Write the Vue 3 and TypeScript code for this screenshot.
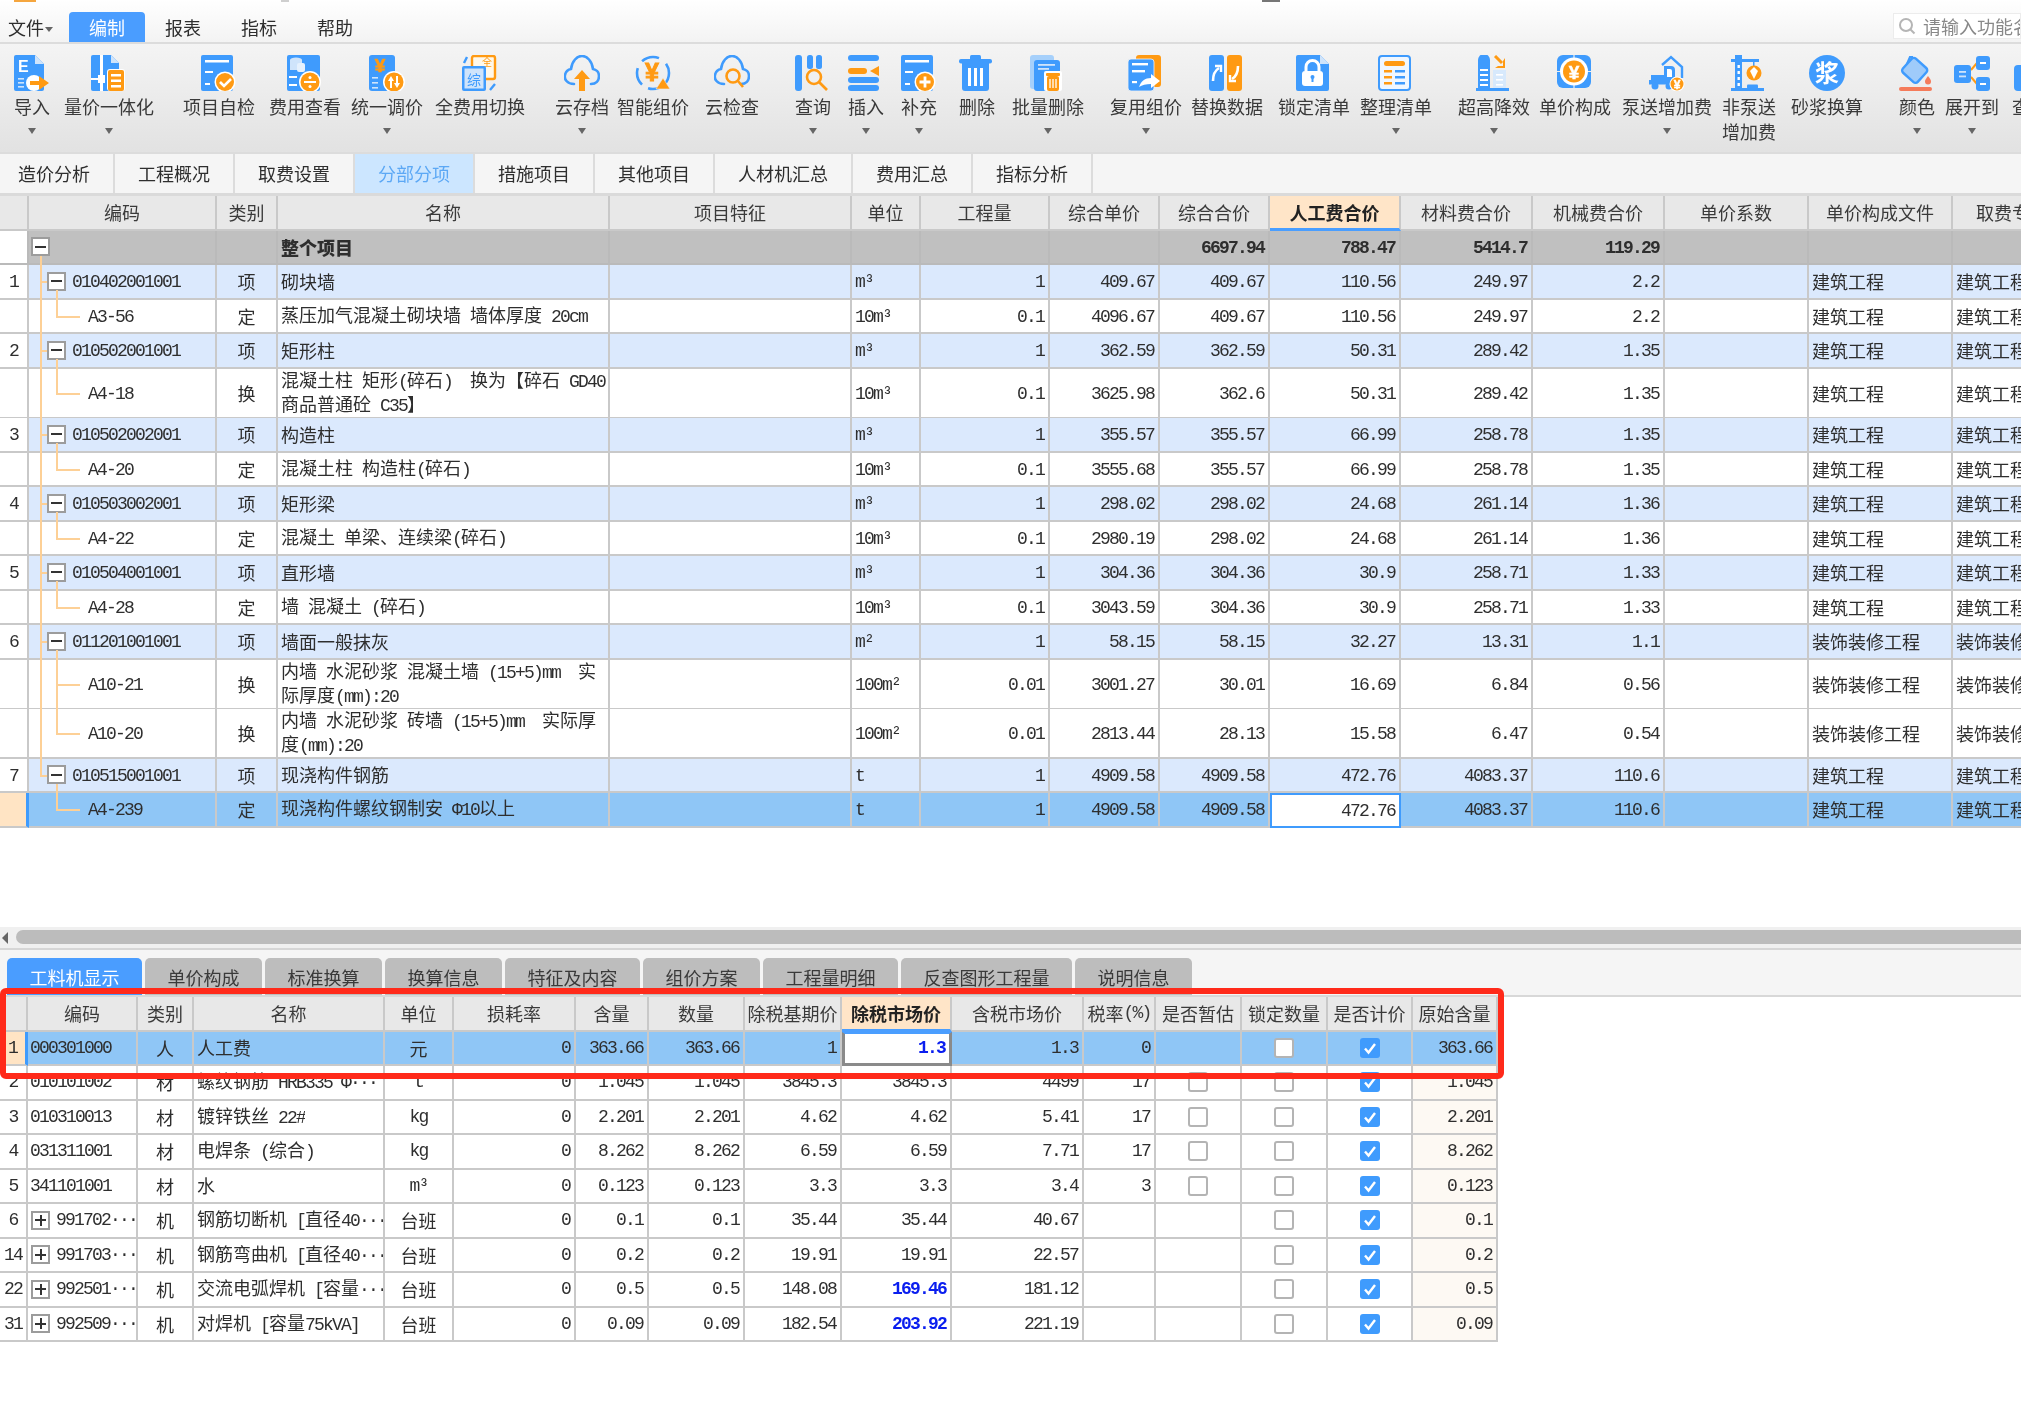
<script setup lang="ts">
const B = '#3f9bfd'
const O = '#ff9a13'
const LB = '#cfe4fb'
const cloud = `<path d="M10 29C3 29 0 24 1 20c.7-3.5 3.5-5.5 6-6C8 6 13 1 18 1s10 5 11 13c3 .5 6 3 6 7 0 5-3 8-8 8" fill="none" stroke="${B}" stroke-width="2.6" stroke-linecap="round"/>`
const doc = `<path d="M2 0H21L30 9V34a2 2 0 0 1-2 2H2a2 2 0 0 1-2-2V2a2 2 0 0 1 2-2z" fill="${B}"/><path d="M21 0L30 9H21z" fill="${LB}"/>`
const yuan = (x: number, y: number, s: number) => `<text x="${x}" y="${y}" font-size="${s}" font-weight="700" text-anchor="middle" fill="#fff" stroke="#fff" stroke-width=".5" font-family="Liberation Sans">¥</text>`

const icons: Record<string, string> = {
  imp: `${doc}<text x="4" y="17" font-size="16" font-weight="700" fill="#fff" font-family="Liberation Sans">E</text><rect x="4" y="23" width="6" height="1.6" fill="${LB}"/><rect x="4" y="27" width="6" height="1.6" fill="${LB}"/><rect x="4" y="31" width="6" height="1.6" fill="${LB}"/><circle cx="20" cy="28" r="8" fill="#fff"/><path d="M16 26h9v-5l10 7-10 7v-5h-9z" fill="${O}"/>`,
  merge: `<path d="M2 0H20L28 8V34a2 2 0 0 1-2 2H2a2 2 0 0 1-2-2V2a2 2 0 0 1 2-2z" fill="${B}"/><path d="M20 0L28 8H20z" fill="${LB}"/><rect x="9" y="0" width="3" height="36" fill="#fff"/><rect x="0" y="23" width="8" height="2" fill="#fff"/><rect x="7" y="20" width="7" height="8" fill="#fff"/><rect x="16" y="14" width="18" height="22" rx="3" fill="#fff"/><rect x="17" y="15" width="16" height="21" rx="2" fill="${O}"/><rect x="20" y="19" width="10" height="2.5" fill="#fff"/><rect x="20" y="24.5" width="10" height="2.5" fill="#fff"/><rect x="20" y="30" width="10" height="2.5" fill="#fff"/>`,
  check: `<rect width="32" height="36" rx="2" fill="${B}"/><rect x="4" y="5" width="24" height="2.5" fill="#fff"/><rect x="4" y="16" width="8" height="2" fill="#fff"/><rect x="4" y="28" width="5" height="2" fill="#fff"/><circle cx="24" cy="27" r="10.5" fill="#fff"/><circle cx="24" cy="27" r="9" fill="${O}"/><path d="M19 27l4 4 7-7" fill="none" stroke="#fff" stroke-width="2.6"/>`,
  fee: `<rect width="33" height="36" rx="2" fill="${B}"/><ellipse cx="9" cy="5" rx="6" ry="2.5" fill="${LB}"/><rect x="3" y="5" width="12" height="10" fill="${LB}"/><rect x="10" y="8" width="8" height="9" rx="2" fill="#e6f1fd"/><rect x="2" y="21" width="8" height="2" fill="#fff"/><rect x="2" y="29" width="8" height="2" fill="#fff"/><circle cx="23" cy="27" r="11" fill="#fff"/><circle cx="23" cy="27" r="9.5" fill="${O}"/><rect x="17" y="26" width="12" height="2" fill="#fff"/><circle cx="23" cy="22.5" r="1.5" fill="#fff"/><circle cx="23" cy="31.5" r="1.5" fill="#fff"/>`,
  tiao: `<rect width="26" height="36" rx="3" fill="${B}"/><text x="11" y="17" font-size="19" font-weight="700" text-anchor="middle" fill="${O}" stroke="${O}" stroke-width=".7" font-family="Liberation Sans">¥</text><rect x="3" y="22" width="6" height="1.6" fill="${LB}"/><rect x="3" y="27" width="6" height="1.6" fill="${LB}"/><rect x="3" y="32" width="6" height="1.6" fill="${LB}"/><circle cx="25" cy="27" r="11" fill="#fff"/><circle cx="25" cy="27" r="9.5" fill="${O}"/><path d="M22 21l3 5h-2v7h-2v-7h-2zM28 33l-3-5h2v-7h2v7h2z" fill="#fff"/>`,
  quan: `<rect x="10" y="1" width="23" height="23" rx="2" fill="#fff8ea" stroke="${O}" stroke-width="2.4"/><text x="20" y="11" font-size="10" fill="${O}" font-family="Noto Sans CJK SC">全</text><rect y="11" width="24" height="25" rx="2" fill="${B}"/><rect x="2.5" y="13.5" width="19" height="20" fill="${LB}"/><text x="5" y="30" font-size="14" fill="${B}" font-family="Noto Sans CJK SC">综</text><path d="M2 8l3-6M28 35l5-6" stroke="${B}" stroke-width="2.4" fill="none"/>`,
  cloudup: `${cloud}<path d="M18 15l8 9h-5v12h-6V24h-5z" fill="${O}"/>`,
  smart: `<circle cx="18" cy="18" r="16" fill="none" stroke="${B}" stroke-width="2.6" stroke-dasharray="30 7 18 8 18 9"/><text x="17" y="26" font-size="25" font-weight="700" text-anchor="middle" fill="${O}" stroke="${O}" stroke-width="1" font-family="Liberation Sans">¥</text><path d="M28 23l7 11H21z" fill="${O}" stroke="#f0f0f0" stroke-width=".6"/>`,
  cloudsearch: `${cloud}<circle cx="19" cy="21" r="6.5" fill="none" stroke="${O}" stroke-width="2.6"/><path d="M24 26l5 6" stroke="${O}" stroke-width="2.6"/>`,
  query: `<rect width="7" height="36" rx="3" fill="${B}"/><rect x="12" width="6" height="14" rx="2.5" fill="${B}"/><rect x="21" width="6" height="14" rx="2.5" fill="${B}"/><circle cx="19" cy="22" r="7" fill="#f0f0f0" stroke="${O}" stroke-width="2.6"/><path d="M24 27l8 8" stroke="${O}" stroke-width="2.6"/>`,
  insert: `<rect width="31" height="6" rx="3" fill="${B}"/><rect y="13" width="19" height="6" rx="3" fill="${O}"/><path d="M31 11V21L22 16z" fill="${O}"/><rect y="22" width="31" height="6" rx="3" fill="${B}"/><rect y="30" width="31" height="6" rx="3" fill="${B}"/>`,
  add: `<rect width="32" height="36" rx="2" fill="${B}"/><rect x="4" y="5" width="24" height="2.5" fill="#fff"/><rect x="4" y="16" width="8" height="2" fill="#fff"/><rect x="4" y="28" width="5" height="2" fill="#fff"/><circle cx="24" cy="27" r="10.5" fill="#fff"/><circle cx="24" cy="27" r="9" fill="${O}"/><path d="M18.5 27h11M24 21.5v11" stroke="#fff" stroke-width="2.8"/>`,
  del: `<rect y="4" width="33" height="4.5" rx="2" fill="${B}"/><rect x="11" width="11" height="6" rx="1.5" fill="${B}"/><path d="M3 8H30V33a3 3 0 0 1-3 3H6a3 3 0 0 1-3-3z" fill="${B}"/><rect x="9" y="13" width="3" height="18" fill="#fff"/><rect x="15" y="13" width="3" height="18" fill="#fff"/><rect x="21" y="13" width="3" height="18" fill="#fff"/>`,
  batch: `<rect width="24" height="34" rx="3" fill="#a6d0fb"/><rect x="4" y="5" width="26" height="31" rx="3" fill="${B}"/><rect x="8" y="9" width="17" height="1.8" fill="${LB}"/><rect x="8" y="13" width="11" height="1.8" fill="${LB}"/><rect x="14" y="16" width="18" height="20" rx="2" fill="#fff"/><rect x="16" y="18" width="14" height="3" rx="1" fill="${O}"/><rect x="17" y="21" width="12" height="15" rx="2" fill="${O}"/><path d="M20 24v9M23 24v9M26 24v9" stroke="#fff" stroke-width="1.3"/>`,
  reuse: `<rect x="8" width="25" height="32" rx="3" fill="${O}"/><rect y="4" width="26" height="32" rx="3" fill="${B}" stroke="#f2f2f2" stroke-width=".8"/><rect x="4" y="8" width="16" height="2.4" fill="#fff"/><rect x="4" y="15" width="13" height="2.4" fill="#fff"/><rect x="4" y="26" width="5" height="2.2" fill="#fff"/><path d="M11 32c2-6 6-9 12-9v-4l9 7-9 7v-4c-5 0-9 1-12 3z" fill="#fff"/>`,
  swap: `<rect width="15" height="36" rx="3" fill="${B}"/><rect x="18" width="15" height="36" rx="3" fill="${O}"/><path d="M4 26c0-6 1-10 6-13" fill="none" stroke="#fff" stroke-width="2.6"/><path d="M6 11h6v6" fill="none" stroke="#fff" stroke-width="2.4"/><path d="M29 11c0 6-1 10-6 13" fill="none" stroke="#fff" stroke-width="2.6"/><path d="M27 26h-6v-6" fill="none" stroke="#fff" stroke-width="2.4"/>`,
  lock: `<path d="M2 0H24L33 9V34a2 2 0 0 1-2 2H2a2 2 0 0 1-2-2V2a2 2 0 0 1 2-2z" fill="${B}"/><path d="M24 0L33 9H24z" fill="${LB}"/><path d="M10 16V12a6.5 6.5 0 0 1 13 0v4" fill="none" stroke="#fff" stroke-width="3"/><rect x="6" y="16" width="21" height="15" rx="3" fill="#fff"/><circle cx="16.5" cy="22" r="2" fill="${B}"/><rect x="15.5" y="23" width="2" height="4" fill="${B}"/>`,
  list: `<rect x="1" y="1" width="31" height="34" rx="3" fill="#f0f7ff" stroke="${B}" stroke-width="2"/><rect x="6" y="6" width="21" height="5" rx="2.5" fill="${O}"/><rect x="6" y="15" width="8" height="2.5" fill="${O}"/><rect x="17" y="15" width="10" height="2.5" fill="${B}"/><rect x="6" y="21" width="8" height="2.5" fill="${O}"/><rect x="17" y="21" width="10" height="2.5" fill="${B}"/><rect x="6" y="27" width="8" height="2.5" fill="${O}"/><rect x="17" y="27" width="10" height="2.5" fill="${B}"/>`,
  build: `<path d="M2 33V5a5 5 0 0 1 12 0V33z" fill="${B}"/><rect y="33" width="33" height="3" fill="${B}"/><rect x="4" y="14" width="8" height="2" fill="#fff"/><rect x="4" y="19" width="8" height="2" fill="#fff"/><rect x="4" y="24" width="8" height="2" fill="#fff"/><rect x="4" y="29" width="8" height="2" fill="#fff"/><rect x="17" y="15" width="13" height="18" fill="#d7e9fc"/><rect x="20" y="19" width="7" height="1.6" fill="#fff"/><rect x="20" y="24" width="7" height="1.6" fill="#fff"/><rect x="20" y="29" width="7" height="1.6" fill="#fff"/><path d="M19 1l7 7" stroke="${O}" stroke-width="3"/><path d="M29 3v10H19l3-2h5V6z" fill="${O}"/>`,
  coin: `<rect width="34" height="33" rx="6" fill="${B}"/><path d="M17 0v33M0 16.5h34" stroke="#eee" stroke-width="1.2"/><circle cx="17" cy="16.5" r="14" fill="#fff"/><circle cx="17" cy="16.5" r="11" fill="${O}"/>${yuan(17, 23.5, 19)}`,
  lift: `<path d="M13 10L22 2l11 10v11" fill="none" stroke="${B}" stroke-width="2.4"/><path d="M15 11h7a4 4 0 0 1 4 4v12H15z" fill="${B}"/><path d="M18 14h3a2 2 0 0 1 2 2v6h-5z" fill="#fff"/><rect y="25" width="22" height="4.5" fill="${B}"/><rect x="2" y="20" width="13" height="6" fill="${B}"/><circle cx="6" cy="31" r="3.5" fill="${B}"/><circle cx="20" cy="31" r="3.5" fill="${B}"/><circle cx="28" cy="29" r="7.5" fill="#fff"/><circle cx="28" cy="29" r="6.5" fill="${O}"/>${yuan(28, 33.5, 12)}`,
  tower: `<rect x="4" width="7" height="34" fill="${B}"/><rect x="6.5" y="10" width="2.4" height="3" fill="#fff"/><rect x="6.5" y="16" width="2.4" height="3" fill="#fff"/><rect x="6.5" y="22" width="2.4" height="3" fill="#fff"/><rect x="6.5" y="28" width="2.4" height="3" fill="#fff"/><rect y="4" width="28" height="3" fill="${B}"/><rect x="22" y="6" width="1.5" height="6" fill="${B}"/><circle cx="23" cy="18" r="7.5" fill="${O}"/><path d="M23 12l-4 4 4 8 4-8z" fill="#fff"/><rect y="33" width="33" height="3" fill="${B}"/><rect x="16" y="29.5" width="11" height="4" rx="1" fill="${B}"/>`,
  jiang: `<circle cx="18" cy="18" r="18" fill="${B}"/><text x="18" y="26.5" font-size="24" font-weight="700" text-anchor="middle" fill="#fff" font-family="Noto Sans CJK SC">浆</text>`,
  bucket: `<path d="M8 9L11 2h3" fill="none" stroke="${B}" stroke-width="2.2"/><g transform="rotate(42 16 15)"><rect x="6" y="6" width="20" height="19" rx="3" fill="#9fcbfa" stroke="${B}" stroke-width="2.4"/></g><path d="M29 21c2 2.5 3 4 3 5.5a3 3 0 0 1-6 0c0-1.5 1-3 3-5.5z" fill="#f57b5a"/><rect y="32" width="33" height="4" rx="2" fill="#f57b5a"/>`,
  share: `<path d="M17 15l6-7M17 22l6 7" stroke="${O}" stroke-width="2"/><rect y="10" width="17" height="18" rx="3" fill="${B}"/><rect x="5" y="16" width="7" height="1.8" fill="${LB}"/><rect x="5" y="20.5" width="7" height="1.8" fill="${LB}"/><rect x="22" y="1" width="14" height="14" rx="3" fill="${B}"/><rect x="26" y="7" width="6" height="2" fill="#fff"/><rect x="22" y="22" width="14" height="14" rx="3" fill="${B}"/><rect x="26" y="28" width="6" height="2" fill="#fff"/>`,
  find: `<rect x="2" y="10" width="30" height="26" rx="4" fill="${B}"/>`,
}

interface Tool { label: string; icon: string; ml: number; drop?: boolean }
const tools: Tool[] = [
  { label: '导入', icon: 'imp', ml: 14, drop: true },
  { label: '量价一体化', icon: 'merge', ml: 14, drop: true },
  { label: '项目自检', icon: 'check', ml: 29 },
  { label: '费用查看', icon: 'fee', ml: 14 },
  { label: '统一调价', icon: 'tiao', ml: 10, drop: true },
  { label: '全费用切换', icon: 'quan', ml: 12 },
  { label: '云存档', icon: 'cloudup', ml: 30, drop: true },
  { label: '智能组价', icon: 'smart', ml: 8 },
  { label: '云检查', icon: 'cloudsearch', ml: 16 },
  { label: '查询', icon: 'query', ml: 36, drop: true },
  { label: '插入', icon: 'insert', ml: 17, drop: true },
  { label: '补充', icon: 'add', ml: 17, drop: true },
  { label: '删除', icon: 'del', ml: 22 },
  { label: '批量删除', icon: 'batch', ml: 17, drop: true },
  { label: '复用组价', icon: 'reuse', ml: 26, drop: true },
  { label: '替换数据', icon: 'swap', ml: 9 },
  { label: '锁定清单', icon: 'lock', ml: 15 },
  { label: '整理清单', icon: 'list', ml: 10, drop: true },
  { label: '超高降效', icon: 'build', ml: 26, drop: true },
  { label: '单价构成', icon: 'coin', ml: 9 },
  { label: '泵送增加费', icon: 'lift', ml: 11, drop: true },
  { label: '非泵送\n增加费', icon: 'tower', ml: 10 },
  { label: '砂浆换算', icon: 'jiang', ml: 15 },
  { label: '颜色', icon: 'bucket', ml: 36, drop: true },
  { label: '展开到', icon: 'share', ml: 10, drop: true },
  { label: '查找', icon: 'find', ml: 13 },
]

const viewTabs = ['造价分析', '工程概况', '取费设置', '分部分项', '措施项目', '其他项目', '人材机汇总', '费用汇总', '指标分析']
const mainHeads = ['', '编码', '类别', '名称', '项目特征', '单位', '工程量', '综合单价', '综合合价', '人工费合价', '材料费合价', '机械费合价', '单价系数', '单价构成文件', '取费专业']

interface MainRow {
  num: string; kind: 'p' | 'c'; code: string; type: string; name: string; unit: string
  vals: string[]; file: string; tall?: boolean; more?: boolean; end?: boolean; sel?: boolean
}
const JZ = '建筑工程'
const ZS = '装饰装修工程'
const rows: MainRow[] = [
  { num: '1', kind: 'p', code: '010402001001', type: '项', name: '砌块墙', unit: 'm³', vals: ['1', '409.67', '409.67', '110.56', '249.97', '2.2'], file: JZ },
  { num: '', kind: 'c', code: 'A3-56', type: '定', name: '蒸压加气混凝土砌块墙 墙体厚度 20cm', unit: '10m³', vals: ['0.1', '4096.67', '409.67', '110.56', '249.97', '2.2'], file: JZ },
  { num: '2', kind: 'p', code: '010502001001', type: '项', name: '矩形柱', unit: 'm³', vals: ['1', '362.59', '362.59', '50.31', '289.42', '1.35'], file: JZ },
  { num: '', kind: 'c', code: 'A4-18', type: '换', name: '混凝土柱 矩形(碎石)  换为【碎石 GD40\n商品普通砼 C35】', unit: '10m³', vals: ['0.1', '3625.98', '362.6', '50.31', '289.42', '1.35'], file: JZ, tall: true },
  { num: '3', kind: 'p', code: '010502002001', type: '项', name: '构造柱', unit: 'm³', vals: ['1', '355.57', '355.57', '66.99', '258.78', '1.35'], file: JZ },
  { num: '', kind: 'c', code: 'A4-20', type: '定', name: '混凝土柱 构造柱(碎石)', unit: '10m³', vals: ['0.1', '3555.68', '355.57', '66.99', '258.78', '1.35'], file: JZ },
  { num: '4', kind: 'p', code: '010503002001', type: '项', name: '矩形梁', unit: 'm³', vals: ['1', '298.02', '298.02', '24.68', '261.14', '1.36'], file: JZ },
  { num: '', kind: 'c', code: 'A4-22', type: '定', name: '混凝土 单梁、连续梁(碎石)', unit: '10m³', vals: ['0.1', '2980.19', '298.02', '24.68', '261.14', '1.36'], file: JZ },
  { num: '5', kind: 'p', code: '010504001001', type: '项', name: '直形墙', unit: 'm³', vals: ['1', '304.36', '304.36', '30.9', '258.71', '1.33'], file: JZ },
  { num: '', kind: 'c', code: 'A4-28', type: '定', name: '墙 混凝土 (碎石)', unit: '10m³', vals: ['0.1', '3043.59', '304.36', '30.9', '258.71', '1.33'], file: JZ },
  { num: '6', kind: 'p', code: '011201001001', type: '项', name: '墙面一般抹灰', unit: 'm²', vals: ['1', '58.15', '58.15', '32.27', '13.31', '1.1'], file: ZS },
  { num: '', kind: 'c', code: 'A10-21', type: '换', name: '内墙 水泥砂浆 混凝土墙 (15+5)mm  实\n际厚度(mm):20', unit: '100m²', vals: ['0.01', '3001.27', '30.01', '16.69', '6.84', '0.56'], file: ZS, tall: true, more: true },
  { num: '', kind: 'c', code: 'A10-20', type: '换', name: '内墙 水泥砂浆 砖墙 (15+5)mm  实际厚\n度(mm):20', unit: '100m²', vals: ['0.01', '2813.44', '28.13', '15.58', '6.47', '0.54'], file: ZS, tall: true },
  { num: '7', kind: 'p', code: '010515001001', type: '项', name: '现浇构件钢筋', unit: 't', vals: ['1', '4909.58', '4909.58', '472.76', '4083.37', '110.6'], file: JZ, end: true },
  { num: '', kind: 'c', code: 'A4-239', type: '定', name: '现浇构件螺纹钢制安 Φ10以上', unit: 't', vals: ['1', '4909.58', '4909.58', '472.76', '4083.37', '110.6'], file: JZ, end: true, sel: true },
]
const totals = ['', '', '6697.94', '788.47', '5414.7', '119.29']

const subTabs = ['工料机显示', '单价构成', '标准换算', '换算信息', '特征及内容', '组价方案', '工程量明细', '反查图形工程量', '说明信息']
const subHeads = ['', '编码', '类别', '名称', '单位', '损耗率', '含量', '数量', '除税基期价', '除税市场价', '含税市场价', '税率(%)', '是否暂估', '锁定数量', '是否计价', '原始含量']

interface SubRow {
  num: string; code: string; tree?: boolean; type: string; name: string; unit: string
  vals: string[]; hot?: boolean; est: boolean; orig: string; sel?: boolean
}
const subRows: SubRow[] = [
  { num: '1', code: '000301000', type: '人', name: '人工费', unit: '元', vals: ['0', '363.66', '363.66', '1', '1.3', '1.3', '0'], est: false, orig: '363.66', sel: true, hot: true },
  { num: '2', code: '010101002', type: '材', name: '螺纹钢筋 HRB335 Φ···', unit: 't', vals: ['0', '1.045', '1.045', '3845.3', '3845.3', '4499', '17'], est: true, orig: '1.045' },
  { num: '3', code: '010310013', type: '材', name: '镀锌铁丝 22#', unit: 'kg', vals: ['0', '2.201', '2.201', '4.62', '4.62', '5.41', '17'], est: true, orig: '2.201' },
  { num: '4', code: '031311001', type: '材', name: '电焊条 (综合)', unit: 'kg', vals: ['0', '8.262', '8.262', '6.59', '6.59', '7.71', '17'], est: true, orig: '8.262' },
  { num: '5', code: '341101001', type: '材', name: '水', unit: 'm³', vals: ['0', '0.123', '0.123', '3.3', '3.3', '3.4', '3'], est: true, orig: '0.123' },
  { num: '6', code: '991702···', tree: true, type: '机', name: '钢筋切断机 [直径40···', unit: '台班', vals: ['0', '0.1', '0.1', '35.44', '35.44', '40.67', ''], est: false, orig: '0.1' },
  { num: '14', code: '991703···', tree: true, type: '机', name: '钢筋弯曲机 [直径40···', unit: '台班', vals: ['0', '0.2', '0.2', '19.91', '19.91', '22.57', ''], est: false, orig: '0.2' },
  { num: '22', code: '992501···', tree: true, type: '机', name: '交流电弧焊机 [容量···', unit: '台班', vals: ['0', '0.5', '0.5', '148.08', '169.46', '181.12', ''], est: false, orig: '0.5', hot: true },
  { num: '31', code: '992509···', tree: true, type: '机', name: '对焊机 [容量75kVA]', unit: '台班', vals: ['0', '0.09', '0.09', '182.54', '203.92', '221.19', ''], est: false, orig: '0.09', hot: true },
]

function runs(text: string): { t: string; l: boolean }[] {
  return text
    .split(/([\x00-\x7f²³Φ·]+)/)
    .filter((t) => t.length > 0)
    .map((t) => ({ t, l: /^[\x00-\x7f²³Φ·]+$/.test(t) }))
}
</script>

<template>
  <div class="app">
    <header class="menu">
      <i class="scrap s1"></i>
      <i class="scrap s2"></i>
      <i class="scrap s3"></i>
      <div class="menu-item file">文件<i class="mini-caret"></i></div>
      <div class="menu-item active">编制</div>
      <div class="menu-item">报表</div>
      <div class="menu-item">指标</div>
      <div class="menu-item">帮助</div>
      <div class="search">
        <svg width="18" height="18" viewBox="0 0 18 18"><circle cx="8" cy="8" r="6" fill="none" stroke="#b5b5b5" stroke-width="2" /><path d="M12.5 12.5l4 4" stroke="#b5b5b5" stroke-width="2" /></svg>
        <span>请输入功能名称</span>
      </div>
    </header>

    <section class="ribbon">
      <div v-for="t in tools" :key="t.label" class="tool" :style="{ marginLeft: t.ml + 'px' }">
        <svg class="tool-icon" width="36" height="36" viewBox="0 0 36 36" v-html="icons[t.icon]"></svg>
        <div class="tool-label">{{ t.label }}</div>
        <i v-if="t.drop" class="caret"></i>
      </div>
    </section>

    <nav class="views">
      <div v-for="t in viewTabs" :key="t" class="view" :class="{ on: t === '分部分项' }">{{ t }}</div>
    </nav>

    <section class="main">
      <div class="row head">
        <div v-for="(h, i) in mainHeads" :key="i" class="c hc" :class="{ act: i === 9 }">{{ h }}</div>
      </div>

      <div class="row total">
        <div class="c num"></div>
        <div class="c code">
          <i class="vl from-mid"></i>
          <i class="box minus first"></i>
        </div>
        <div class="c"></div>
        <div class="c name"><b>整个项目</b></div>
        <div class="c"></div>
        <div class="c"></div>
        <div v-for="(v, i) in totals" :key="i" class="c rt"><span class="l">{{ v }}</span></div>
        <div class="c"></div>
        <div class="c"></div>
        <div class="c"></div>
      </div>

      <div v-for="r in rows" :key="r.code" class="row" :class="[r.kind === 'p' ? 'parent' : 'child', { tall: r.tall, sel: r.sel }]">
        <div class="c num"><span class="l">{{ r.num }}</span></div>
        <div class="c code">
          <i v-if="!r.sel" class="vl" :class="{ half: r.end }"></i>
          <template v-if="r.kind === 'p'">
            <i class="hl short"></i>
            <i class="box minus"></i>
            <i class="vl2 below"></i>
            <span class="code-p l">{{ r.code }}</span>
          </template>
          <template v-else>
            <i class="vl2" :class="{ half: !r.more }"></i>
            <i class="hl long"></i>
            <span class="code-c l">{{ r.code }}</span>
          </template>
        </div>
        <div class="c ctr">{{ r.type }}</div>
        <div class="c name"><div class="tx"><span v-for="(p, i) in runs(r.name)" :key="i" :class="{ l: p.l }">{{ p.t }}</span></div></div>
        <div class="c"></div>
        <div class="c unit"><span class="l">{{ r.unit }}</span></div>
        <div v-for="(v, i) in r.vals" :key="i" class="c rt" :class="{ cur: r.sel && i === 3 }"><span class="l">{{ v }}</span></div>
        <div class="c"></div>
        <div class="c file">{{ r.file }}</div>
        <div class="c file">{{ r.file }}</div>
      </div>
    </section>

    <div class="scrollbar"><i class="arrow"></i><i class="thumb"></i></div>

    <section class="lower">
      <nav class="subtabs">
        <div v-for="(t, i) in subTabs" :key="t" class="subtab" :class="{ on: i === 0 }">{{ t }}</div>
      </nav>

      <div class="sub">
        <div class="row head">
          <div v-for="(h, i) in subHeads" :key="i" class="c hc" :class="{ act: i === 9 }"><span v-for="(p, j) in runs(h)" :key="j" :class="{ l: p.l }">{{ p.t }}</span></div>
        </div>
        <div v-for="r in subRows" :key="r.num" class="row" :class="{ sel: r.sel }">
          <div class="c num"><span class="l">{{ r.num }}</span></div>
          <div class="c code-s">
            <i v-if="r.tree" class="box plus"></i>
            <span class="l">{{ r.code }}</span>
          </div>
          <div class="c ctr">{{ r.type }}</div>
          <div class="c name"><div class="tx one"><span v-for="(p, i) in runs(r.name)" :key="i" :class="{ l: p.l }">{{ p.t }}</span></div></div>
          <div class="c ctr"><span v-for="(p, i) in runs(r.unit)" :key="i" :class="{ l: p.l }">{{ p.t }}</span></div>
          <div v-for="(v, i) in r.vals" :key="i" class="c rt" :class="{ cur: r.sel && i === 4, hotcell: r.hot && i === 4 }"><span class="l">{{ v }}</span></div>
          <div class="c ctr"><i v-if="r.est" class="cb"></i></div>
          <div class="c ctr"><i class="cb"></i></div>
          <div class="c ctr">
            <i class="cb on"><svg width="20" height="20" viewBox="0 0 20 20"><path d="M5 10.5l3.5 4L15 6" fill="none" stroke="#fff" stroke-width="2.4" /></svg></i>
          </div>
          <div class="c rt orig"><span class="l">{{ r.orig }}</span></div>
        </div>
      </div>

      <div class="redbox"></div>
    </section>
  </div>
</template>

<style scoped>
.app {
  width: 2021px;
  height: 1419px;
  overflow: hidden;
  background: #fff;
  font-family: "Noto Sans CJK SC", "Liberation Sans", sans-serif;
  font-size: 18px;
  color: #2e2e2e;
  filter: blur(0.45px);
}
.l {
  font-family: "Liberation Mono", "Noto Sans CJK SC", monospace;
  font-size: 18px;
  letter-spacing: -1.8px;
}
.main .c > .l {
  padding-top: 2px;
}
i {
  display: block;
  font-style: normal;
}

/* menu */
.menu {
  height: 44px;
  box-sizing: border-box;
  display: flex;
  align-items: flex-end;
  position: relative;
  background: linear-gradient(#ffffff, #f3f3f3);
  border-bottom: 2px solid #dcdcdc;
}
.scrap {
  position: absolute;
  top: 0;
  height: 2px;
}
.s1 {
  left: 14px;
  width: 22px;
  background: #f5a63f;
}
.s2 {
  left: 281px;
  width: 8px;
  background: #cfcfcf;
}
.s3 {
  left: 1262px;
  width: 18px;
  background: #777;
}
.menu-item {
  width: 76px;
  height: 30px;
  line-height: 30px;
  text-align: center;
}
.menu-item.file {
  width: 69px;
  display: flex;
  padding-left: 8px;
  box-sizing: border-box;
  align-items: center;
}
.menu-item.active {
  background: #4a9dff;
  color: #fff;
  border-radius: 4px 4px 0 0;
}
.mini-caret {
  margin: 4px 0 0 1px;
  border: 4px solid transparent;
  border-top: 5px solid #666;
  border-bottom: 0;
}
.search {
  margin-left: auto;
  margin-bottom: 3px;
  width: 128px;
  height: 26px;
  box-sizing: border-box;
  display: flex;
  align-items: center;
  gap: 7px;
  padding-left: 4px;
  background: #fff;
  border: 1px solid #ececec;
  color: #888;
  white-space: nowrap;
  overflow: hidden;
}
.search svg {
  flex: none;
}

/* ribbon */
.ribbon {
  height: 110px;
  box-sizing: border-box;
  display: flex;
  padding-top: 11px;
  background: linear-gradient(#f4f4f4, #e2e2e2);
  border-bottom: 2px solid #dcdcdc;
}
.tool {
  flex: none;
  display: flex;
  flex-direction: column;
  align-items: center;
}
.tool-icon {
  flex: none;
  display: block;
}
.tool-label {
  margin-top: 3px;
  line-height: 25px;
  white-space: pre;
  color: #3a3a3a;
}
.caret {
  margin-top: 9px;
  border: 4px solid transparent;
  border-top: 6px solid #666;
  border-bottom: 0;
}

/* sheet tabs */
.views {
  height: 42px;
  box-sizing: border-box;
  display: flex;
  background: #f5f5f5;
  border-bottom: 3px solid #dadada;
}
.view {
  padding: 0 22.5px 0 23.5px;
  line-height: 38px;
  border-right: 2px solid #dcdcdc;
}
.view:first-child {
  padding-left: 18px;
}
.view.on {
  background: #cce6ff;
  color: #5ca8f5;
}

/* main grid */
.main {
  height: 731px;
}
.row {
  display: grid;
  height: 34.5px;
  grid-template-columns: 29px 188px 61px 332px 242px 69px 129px 110px 110px 131px 132px 132px 144px 144px 120px;
}
.row.tall {
  height: 49.5px;
}
.c {
  box-sizing: border-box;
  min-width: 0;
  position: relative;
  display: flex;
  align-items: center;
  border-right: 2px solid #c9c9c9;
  border-bottom: 2px solid #c9c9c9;
  white-space: pre;
}
.head .c {
  background: #e8e8e8;
  justify-content: center;
  color: #3a3a3a;
}
.head .c.act {
  background: #ffe5c8;
  font-weight: 700;
  color: #222;
  border-bottom: 3px solid #4a9eff;
}
.parent .c {
  background: #dbe9fd;
}
.child .c {
  background: #fff;
}
.row .c.num {
  background: #fff;
  justify-content: center;
}
.total .c {
  background: #c0c0c0;
  font-weight: 700;
  border-color: #bababa;
}
.total .l {
  font-weight: 700;
}
.sel .c {
  background: #8fc6f6;
}
.row.sel .c.num {
  background: #ffe4c4;
  border-right: 3px solid #3f9bfd;
}
.ctr {
  justify-content: center;
}
.rt {
  justify-content: flex-end;
  padding-right: 4px;
}
.name,
.file,
.unit {
  padding-left: 3px;
}
.tx {
  line-height: 21px;
}
.tx.one {
  overflow: hidden;
}
.main .row.sel .c.cur {
  background: #fff;
  border: 2px solid #3f9bfd;
}

/* tree */
.vl,
.vl2,
.hl {
  position: absolute;
  background: #fdd096;
}
.vl {
  left: 11px;
  top: 0;
  bottom: -2px;
  width: 2px;
}
.vl.half {
  bottom: 50%;
}
.vl.from-mid {
  top: 50%;
}
.vl2 {
  left: 27px;
  top: 0;
  bottom: -2px;
  width: 2px;
}
.vl2.half {
  bottom: 50%;
}
.vl2.below {
  top: calc(50% + 9px);
}
.hl {
  height: 2px;
  top: 50%;
  left: 11px;
}
.hl.short {
  width: 8px;
}
.hl.long {
  left: 27px;
  width: 24px;
}
.box {
  box-sizing: border-box;
  width: 19px;
  height: 19px;
  border: 2px solid #9c9c9c;
  background: #fff;
  position: relative;
  flex: none;
}
.box::before {
  content: "";
  position: absolute;
  left: 2px;
  right: 2px;
  top: 6.5px;
  height: 2px;
  background: #333;
}
.box.plus::after {
  content: "";
  position: absolute;
  top: 2px;
  bottom: 2px;
  left: 6.5px;
  width: 2px;
  background: #333;
}
.code > .box {
  position: absolute;
  left: 18px;
  top: calc(50% - 9.5px);
}
.code > .box.first {
  left: 2px;
}
.code-p {
  margin-left: 43px;
  position: relative;
}
.code-c {
  margin-left: 59px;
  position: relative;
}

/* divider */
.scrollbar {
  height: 21px;
  position: relative;
  background: #f0f0f0;
  border-bottom: 2px solid #d6d6d6;
}
.arrow {
  position: absolute;
  left: 2px;
  top: 5px;
  border: 6px solid transparent;
  border-right: 6px solid #666;
  border-left: 0;
}
.thumb {
  position: absolute;
  left: 16px;
  right: -20px;
  top: 3px;
  height: 14px;
  background: #bcbcbc;
  border-radius: 7px;
}

/* lower */
.lower {
  position: relative;
}
.subtabs {
  height: 47px;
  box-sizing: border-box;
  display: flex;
  align-items: flex-end;
  gap: 3px;
  padding-left: 7px;
  background: #f5f5f5;
  border-bottom: 2px solid #d8d8d8;
}
.subtab {
  height: 37px;
  line-height: 38px;
  padding: 0 22.5px;
  background: #bdbdbd;
  border-radius: 5px 5px 0 0;
  color: #3a3a3a;
}
.subtab.on {
  background: #4a9dff;
  color: #fff;
}
.sub {
  width: 1498px;
}
.sub .row {
  grid-template-columns: 28px 110px 56px 191px 69px 122px 73px 96px 97px 110px 132px 72px 86px 86px 85px 85px;
}
.code-s {
  padding-left: 2px;
  gap: 6px;
}
.sub .box {
  margin-left: 1px;
}
.orig {
  background: #fdf9f3;
}
.sub .sel .orig {
  background: #8fc6f6;
}
.hotcell .l {
  color: #0a1eef;
  font-weight: 700;
}
.sub .row.sel .c.cur {
  background: #fff;
  border: 3px solid #8a8a8a;
  border-top: 2px solid #4a9eff;
}
.cb {
  box-sizing: border-box;
  width: 20px;
  height: 20px;
  background: #fff;
  border: 2px solid #b4b4b4;
  border-radius: 3px;
}
.cb.on {
  background: #3f9bfd;
  border: 0;
}
.cb svg {
  display: block;
}
.redbox {
  position: absolute;
  left: 0;
  top: 38px;
  width: 1504px;
  height: 91px;
  box-sizing: border-box;
  border: 6px solid #ff2a1a;
  border-radius: 6px;
  pointer-events: none;
}
</style>
